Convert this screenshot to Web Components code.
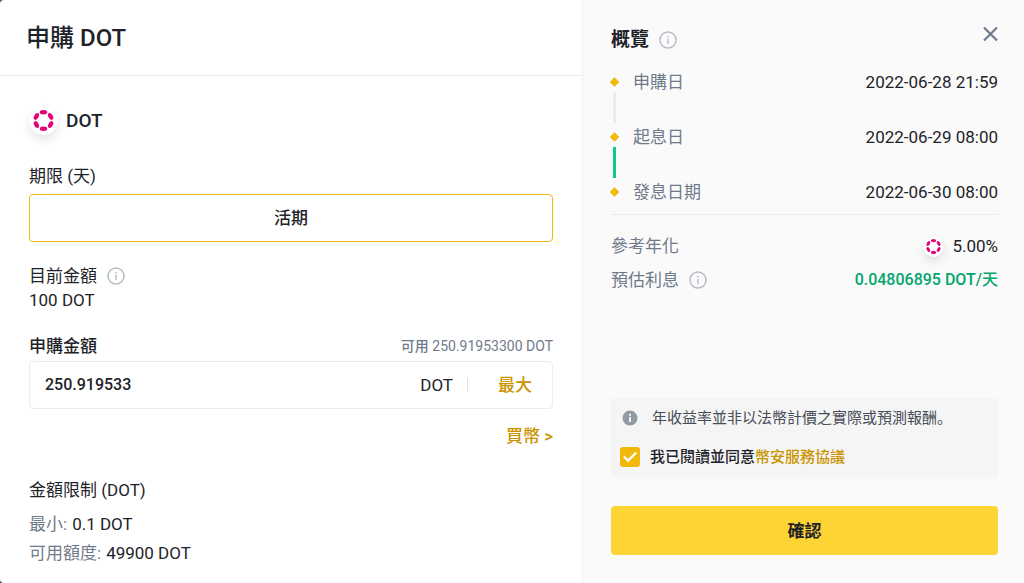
<!DOCTYPE html>
<html lang="zh-Hant">
<head>
<meta charset="utf-8">
<meta name="viewport" content="width=device-width, initial-scale=1">
<title>申購 DOT</title>
<style>
  html { height: 100%; }
  body {
    margin: 0;
    min-height: 100%;
    display: grid;
    background: #474d57;
    color: #1e2329;
    font: 400 17px/24px Roboto, "Noto Sans CJK SC", sans-serif;
    --line: #eaecef;
    --muted: #707a8a;
    --gold: #c99400;
    --brand: #f0b90b;
  }
</style>
</head>
<body>
<subscribe-dialog></subscribe-dialog>

<script>
const define = (name, html) => {
  const template = document.createElement('template');
  template.innerHTML = html;
  customElements.define(name, class extends HTMLElement {
    constructor() {
      super();
      this.attachShadow({ mode: 'open' }).append(template.content.cloneNode(true));
    }
  });
};

define('info-icon', `
  <style>
    :host { display: inline-flex; width: 18px; height: 18px; color: #b7bdc6; flex: none; }
    svg { width: 100%; height: 100%; }
  </style>
  <svg viewBox="0 0 18 18" fill="none" stroke="currentColor" aria-hidden="true">
    <circle cx="9" cy="9" r="8" stroke-width="1.5"/>
    <path d="M9 8v5" stroke-width="1.5"/>
    <path d="M9 5v1.6" stroke-width="1.6"/>
  </svg>`);

define('dot-coin', `
  <style>
    :host { display: inline-flex; width: 29px; height: 29px; border-radius: 50%; background: #fff;
      box-shadow: 0 5px 10px rgba(24, 26, 32, .1), 0 0 3px rgba(24, 26, 32, .05); flex: none; }
    :host([small]) { width: 21px; height: 21px; }
    svg { width: 100%; height: 100%; }
  </style>
  <svg viewBox="0 0 29 29" fill="#e6007a" aria-hidden="true">
    <ellipse cx="14.5" cy="6.3" rx="3.7" ry="2.2"/>
    <ellipse cx="14.5" cy="22.7" rx="3.7" ry="2.2"/>
    <ellipse cx="7.4" cy="10.4" rx="3.7" ry="2.2" transform="rotate(-60 7.4 10.4)"/>
    <ellipse cx="21.6" cy="18.6" rx="3.7" ry="2.2" transform="rotate(-60 21.6 18.6)"/>
    <ellipse cx="21.6" cy="10.4" rx="3.7" ry="2.2" transform="rotate(60 21.6 10.4)"/>
    <ellipse cx="7.4" cy="18.6" rx="3.7" ry="2.2" transform="rotate(60 7.4 18.6)"/>
  </svg>`);

define('amount-field', `
  <style>
    :host { display: block; }
    .head { display: flex; justify-content: space-between; align-items: center; margin-bottom: 3px; }
    label { font-weight: 500; }
    .available { font-size: 14px; font-weight: 450; color: var(--muted); }
    .box { display: flex; align-items: center; height: 48px; box-sizing: border-box;
      border: 1px solid var(--line); border-radius: 4px; padding: 0 20px 0 15px; }
    input { flex: 1; min-width: 0; border: 0; padding: 0; outline: 0; background: none;
      font: inherit; font-size: 16px; font-weight: 500; color: inherit; }
    .bar { width: 1px; height: 14px; background: #dfe2e6; margin: 0 30px 0 14px; }
    button { border: 0; padding: 0; background: none; font: inherit; font-weight: 500; color: var(--gold); }
  </style>
  <div class="head">
    <label for="amount">申購金額</label>
    <span class="available">可用 250.91953300 DOT</span>
  </div>
  <div class="box">
    <input id="amount" value="250.919533" inputmode="decimal">
    <span>DOT</span><span class="bar"></span>
    <button type="button">最大</button>
  </div>`);

define('subscribe-form', `
  <style>
    :host { display: block; background: #fff; border-radius: 4px 0 0 4px; }
    header { padding: 22px 26px 21px; border-bottom: 1px solid var(--line); }
    h1 { margin: 0; font-size: 24px; line-height: 32px; font-weight: 500; }
    .body { padding: 30px 29px 18px; }
    .coin { display: flex; align-items: center; gap: 8px; height: 29px; margin-bottom: 29px;
      font-size: 19px; font-weight: 500; }
    .term { display: block; width: 100%; height: 48px; margin: 6px 0 22px; padding: 0;
      border: 1px solid var(--brand); border-radius: 4px; background: #fff; font: inherit; font-weight: 500; color: inherit; }
    .row { display: flex; align-items: center; gap: 10px; }
    amount-field { margin: 22px 0 15px; }
    .buy { display: flex; justify-content: flex-end; margin-bottom: 30px; }
    a { color: var(--gold); text-decoration: none; font-weight: 500; }
    dl { margin: 10px 0 0; display: grid; gap: 5px; }
    dl div { display: flex; gap: 5px; }
    dt { color: var(--muted); }
    dd { margin: 0; }
  </style>
  <header><h1>申購 DOT</h1></header>
  <div class="body">
    <div class="coin"><dot-coin></dot-coin>DOT</div>
    <div>期限 (天)</div>
    <button type="button" class="term">活期</button>
    <div class="row">目前金額<info-icon></info-icon></div>
    <div>100 DOT</div>
    <amount-field></amount-field>
    <div class="buy"><a href="#buy">買幣 &gt;</a></div>
    <div>金額限制 (DOT)</div>
    <dl>
      <div><dt>最小:</dt><dd>0.1 DOT</dd></div>
      <div><dt>可用額度:</dt><dd>49900 DOT</dd></div>
    </dl>
  </div>`);

define('timeline-step', `
  <style>
    :host { display: flex; line-height: 20px; }
    .mark { display: flex; flex-direction: column; align-items: center; width: 7px; margin-right: 15px; }
    svg { width: 9px; height: 20px; flex: none; }
    .line { width: 3px; height: 31px; margin-bottom: 4px; background: var(--line); }
    :host([active]) .line { background: #0ecb81; }
    :host([last]) .line { display: none; }
    .name { flex: 1; color: var(--muted); }
    .date { font-weight: 450; }
  </style>
  <div class="mark">
    <svg viewBox="0 0 9 20" aria-hidden="true"><path d="M4.500 5.500 9 10 4.500 14.500 0 10z" fill="#f0b90b" stroke="#f0b90b" stroke-width=".6" stroke-linejoin="round"/></svg>
    <span class="line"></span>
  </div>
  <span class="name"><slot></slot></span>
  <span class="date"><slot name="date"></slot></span>`);

define('agreement-box', `
  <style>
    :host { display: grid; gap: 15px; padding: 8px 9px; background: #f5f5f5; border-radius: 4px 4px 0 0;
      font-size: 15px; }
    .note { display: flex; align-items: center; color: #474d57; }
    .note svg { width: 16px; height: 16px; margin: 0 14px 0 2px; flex: none; }
    label { display: flex; align-items: center; }
    input { appearance: none; width: 20px; height: 20px; margin: 0 10px 0 0; border-radius: 3px; flex: none;
      background: var(--brand); display: grid; place-items: center; }
    input:checked::before { content: ""; width: 14px; height: 11px; background: #fff;
      clip-path: polygon(0 52%, 11% 39%, 36% 68%, 88% 3%, 100% 17%, 37% 97%); }
    a { color: var(--gold); text-decoration: none; }
    label span { font-weight: 500; }
  </style>
  <div class="note" lang="zh-Hans">
    <svg viewBox="0 0 16 16" aria-hidden="true">
      <circle cx="8" cy="8" r="7.5" fill="#929aa5"/>
      <path d="M8 7v5M8 3.8v1.9" stroke="#f5f5f5" stroke-width="1.9"/>
    </svg>
    年收益率並非以法幣計價之實際或預測報酬。
  </div>
  <label><input type="checkbox" checked><span>我已閱讀並同意<a href="#terms">幣安服務協議</a></span></label>`);

define('overview-panel', `
  <style>
    :host { display: flex; flex-direction: column; box-sizing: border-box; padding: 22px 26px 28px 28px;
      background: #fafafa; border-left: 1px solid #f0f1f2; }
    header { display: flex; justify-content: space-between; align-items: flex-start; margin-bottom: 14px; }
    h2 { margin: 0; display: flex; align-items: center; gap: 10px; height: 36px; font-size: 19px; font-weight: 700; }
    .close { display: flex; border: 0; padding: 4px 0; background: none; color: var(--muted); }
    .steps { padding-bottom: 12px; margin-bottom: 19px; border-bottom: 1px solid var(--line); }
    .row { display: flex; align-items: center; justify-content: space-between; margin-bottom: 10px; font-weight: 450; }
    .name { display: flex; align-items: center; gap: 10px; color: var(--muted); font-weight: 400; }
    .value { display: flex; align-items: center; gap: 8px; }
    .gain { color: #03a66d; font-size: 16px; font-weight: 500; }
    agreement-box { margin-top: auto; }
    .confirm { height: 49px; margin-top: 29px; border: 0; border-radius: 4px; background: #fcd535;
      font: inherit; font-weight: 700; color: inherit; flex: none; }
  </style>
  <header>
    <h2>概覽 <info-icon></info-icon></h2>
    <button type="button" class="close" aria-label="關閉">
      <svg width="15" height="16" viewBox="0 0 15 16" fill="none" stroke="currentColor" stroke-width="2.200" aria-hidden="true">
        <path d="m1 1.500 13 13M14 1.500l-13 13"/>
      </svg>
    </button>
  </header>
  <div class="steps">
    <timeline-step>申購日<span slot="date">2022-06-28 21:59</span></timeline-step>
    <timeline-step active>起息日<span slot="date">2022-06-29 08:00</span></timeline-step>
    <timeline-step last>發息日期<span slot="date">2022-06-30 08:00</span></timeline-step>
  </div>
  <div class="row"><span class="name">參考年化</span><span class="value"><dot-coin small></dot-coin>5.00%</span></div>
  <div class="row"><span class="name">預估利息<info-icon></info-icon></span><span class="value gain">0.04806895 DOT/天</span></div>
  <agreement-box></agreement-box>
  <button type="button" class="confirm">確認</button>`);

define('subscribe-dialog', `
  <style>
    :host { display: grid; grid-template-columns: 582fr 442fr; }
  </style>
  <subscribe-form></subscribe-form>
  <overview-panel></overview-panel>`);
</script>
</body>
</html>
